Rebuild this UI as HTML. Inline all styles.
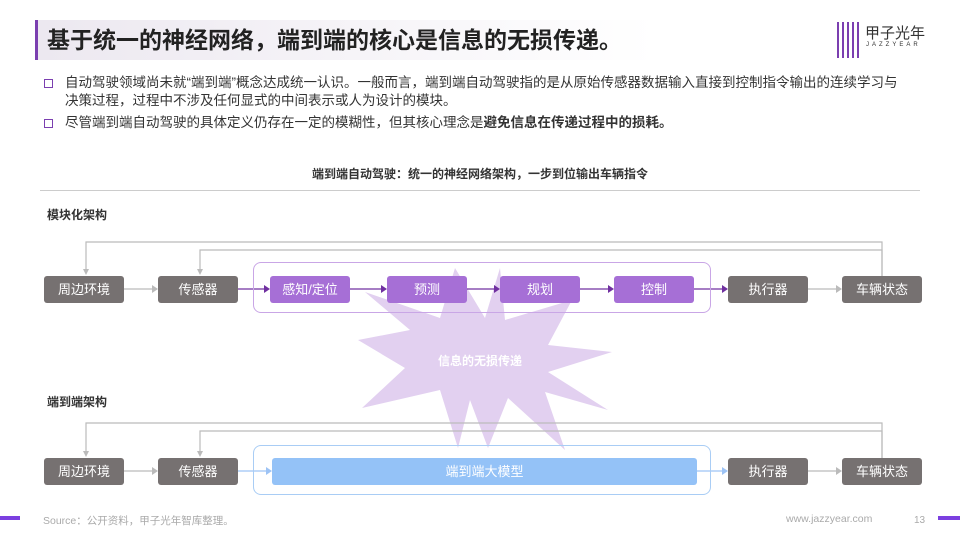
<!DOCTYPE html>
<html><head><meta charset="utf-8"><style>
*{margin:0;padding:0;box-sizing:border-box}
body{width:960px;height:540px;overflow:hidden;background:#fff;font-family:"Liberation Sans","Noto Sans CJK SC",sans-serif;position:relative;color:#333}
.a{position:absolute}
.box{position:absolute;height:27px;line-height:27px;text-align:center;color:#fff;font-size:13px;border-radius:3px}
.g{background:#767171;width:80px}
.p{background:#a66fd6;width:80px}
.ln{position:absolute;background:#bbb}
</style></head><body>
<div class="a" style="left:35px;top:20px;width:620px;height:40px;background:linear-gradient(90deg,#ece8f0,#fff);border-left:3px solid #7b3fb0"></div>
<div class="a" style="left:47px;top:24px;font-size:23px;font-weight:bold;color:#222;line-height:32px">基于统一的神经网络，端到端的核心是信息的无损传递。</div>
<div class="a" style="left:837px;top:22px;width:22px;height:36px;background:repeating-linear-gradient(90deg,#7b3fb0 0 2px,transparent 2px 5px)"></div>
<div class="a" style="left:865px;top:22px;font-size:15px;color:#333">甲子光年</div>
<div class="a" style="left:866px;top:42px;font-size:6px;letter-spacing:3px;color:#333">JAZZYEAR</div>

<div class="a" style="left:44px;top:79px;width:9px;height:9px;border:1.5px solid #7b3fb0"></div>
<div class="a" style="left:65px;top:74px;font-size:13.5px;line-height:18px;width:845px">自动驾驶领域尚未就“端到端”概念达成统一认识。一般而言，端到端自动驾驶指的是从原始传感器数据输入直接到控制指令输出的连续学习与决策过程，过程中不涉及任何显式的中间表示或人为设计的模块。</div>
<div class="a" style="left:44px;top:119px;width:9px;height:9px;border:1.5px solid #7b3fb0"></div>
<div class="a" style="left:65px;top:114px;font-size:13.5px;line-height:18px">尽管端到端自动驾驶的具体定义仍存在一定的模糊性，但其核心理念是<b>避免信息在传递过程中的损耗。</b></div>

<div class="a" style="left:0;width:960px;top:165px;text-align:center;font-size:12px;font-weight:bold">端到端自动驾驶：统一的神经网络架构，一步到位输出车辆指令</div>
<div class="ln" style="left:40px;top:190px;width:880px;height:1px;background:#ccc"></div>
<div class="a" style="left:47px;top:206px;font-size:12px;font-weight:bold">模块化架构</div>
<div class="a" style="left:47px;top:393px;font-size:12px;font-weight:bold">端到端架构</div>

<svg class="a" style="left:0;top:0" width="960" height="540">
<polygon fill="#e2d0f0" points="365,292 440,318 455,268 485,318 500,268 505,320 572,300 548,345 612,352 548,372 608,410 545,392 565,450 508,398 488,448 470,400 458,448 440,390 362,408 405,368 358,340 410,330"/>
<g fill="none" stroke="#bbb" stroke-width="1.2">
<polyline points="882,276 882,242 86,242 86,270"/>
<polyline points="882,276 882,250 200,250 200,270"/>
<polyline points="882,458 882,423 86,423 86,452"/>
<polyline points="882,458 882,431 200,431 200,452"/>
<line x1="123" y1="289" x2="152" y2="289"/><line x1="807" y1="289" x2="836" y2="289"/>
<line x1="123" y1="471" x2="152" y2="471"/><line x1="807" y1="471" x2="836" y2="471"/>
</g>
<g fill="#bbb"><path d="M86,275 l-3,-6 h6z"/><path d="M200,275 l-3,-6 h6z"/><path d="M86,457 l-3,-6 h6z"/><path d="M200,457 l-3,-6 h6z"/>
<path d="M158,289 l-6,-4 v8z"/><path d="M842,289 l-6,-4 v8z"/><path d="M158,471 l-6,-4 v8z"/><path d="M842,471 l-6,-4 v8z"/></g>
<g stroke="#7030a0" stroke-width="1.2"><line x1="237" y1="289" x2="266" y2="289"/><line x1="350" y1="289" x2="382" y2="289"/><line x1="466" y1="289" x2="495" y2="289"/><line x1="580" y1="289" x2="609" y2="289"/><line x1="693" y1="289" x2="723" y2="289"/></g>
<g fill="#7030a0"><path d="M270,289 l-6,-4 v8z"/><path d="M387,289 l-6,-4 v8z"/><path d="M500,289 l-6,-4 v8z"/><path d="M614,289 l-6,-4 v8z"/><path d="M728,289 l-6,-4 v8z"/></g>
<g stroke="#9dc3f5" stroke-width="1.2"><line x1="237" y1="471" x2="268" y2="471"/><line x1="697" y1="471" x2="723" y2="471"/></g>
<g fill="#9dc3f5"><path d="M272,471 l-6,-4 v8z"/><path d="M728,471 l-6,-4 v8z"/></g>
</svg>
<div class="a" style="left:253px;top:262px;width:458px;height:51px;border:1px solid #c9a6e6;border-radius:8px"></div>
<div class="a" style="left:253px;top:445px;width:458px;height:50px;border:1px solid #a9cdf5;border-radius:8px"></div>
<div class="a" style="left:0;width:960px;top:352px;text-align:center;color:#fff;font-size:12px;font-weight:bold">信息的无损传递</div>

<div class="box g" style="left:44px;top:276px">周边环境</div>
<div class="box g" style="left:158px;top:276px">传感器</div>
<div class="box p" style="left:270px;top:276px">感知/定位</div>
<div class="box p" style="left:387px;top:276px">预测</div>
<div class="box p" style="left:500px;top:276px">规划</div>
<div class="box p" style="left:614px;top:276px">控制</div>
<div class="box g" style="left:728px;top:276px">执行器</div>
<div class="box g" style="left:842px;top:276px">车辆状态</div>

<div class="box g" style="left:44px;top:458px">周边环境</div>
<div class="box g" style="left:158px;top:458px">传感器</div>
<div class="box" style="left:272px;top:458px;width:425px;background:#94c2f7">端到端大模型</div>
<div class="box g" style="left:728px;top:458px">执行器</div>
<div class="box g" style="left:842px;top:458px">车辆状态</div>

<div class="a" style="left:0;top:516px;width:20px;height:4px;background:#7b3fe0"></div>
<div class="a" style="left:938px;top:516px;width:22px;height:4px;background:#7b3fe0"></div>
<div class="a" style="left:43px;top:513px;font-size:10.5px;color:#aaa">Source：公开资料，甲子光年智库整理。</div>
<div class="a" style="left:786px;top:513px;font-size:10.5px;color:#aaa">www.jazzyear.com</div>
<div class="a" style="left:914px;top:515px;font-size:10px;color:#aaa">13</div>
</body></html>
